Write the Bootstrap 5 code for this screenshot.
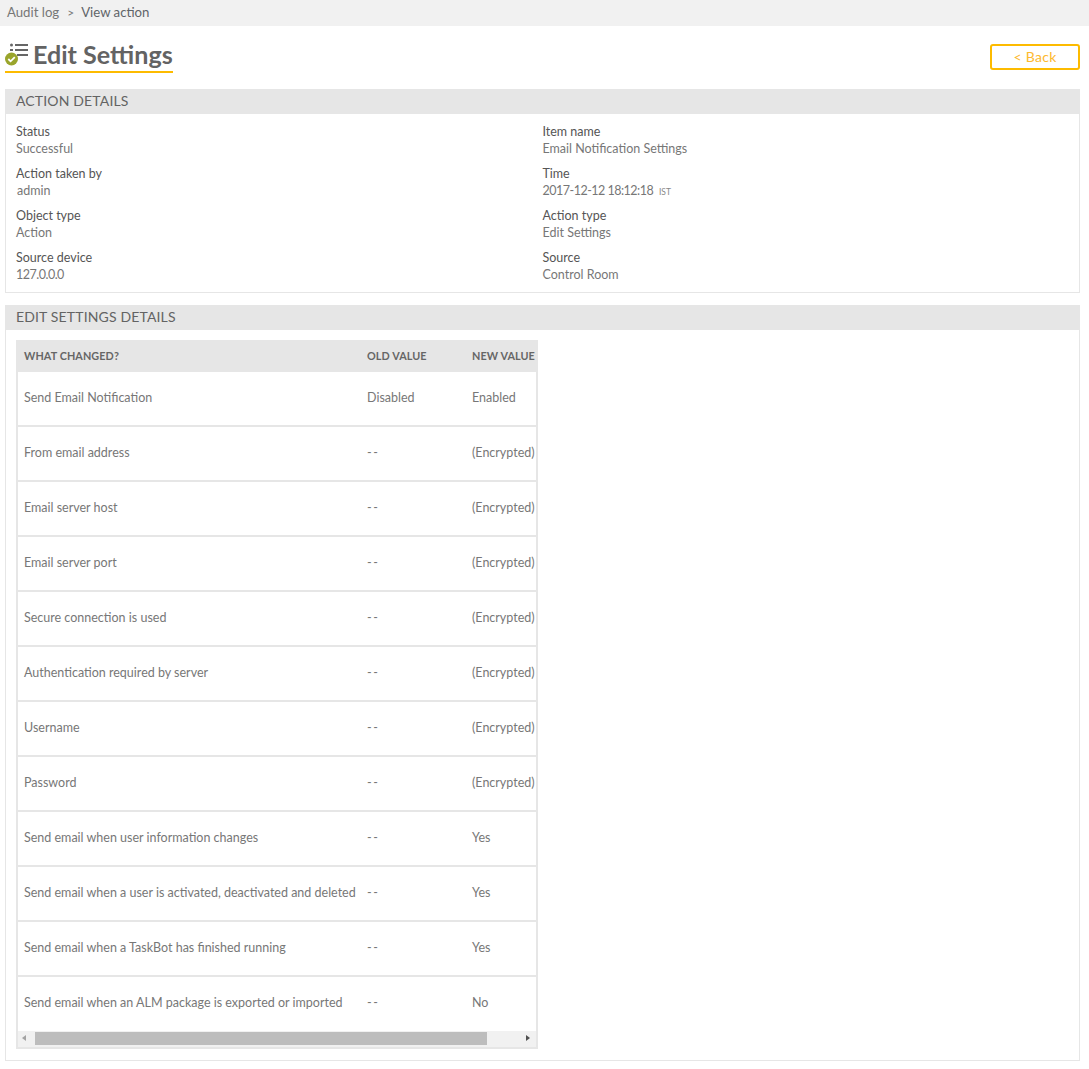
<!DOCTYPE html>
<html lang="en">
<head>
<meta charset="utf-8">
<title>Edit Settings</title>
<link href="https://cdn.jsdelivr.net/npm/bootstrap@5.3.0/dist/css/bootstrap.min.css" rel="stylesheet">
<style>
body{font-family:"Lato","Liberation Sans",sans-serif;font-size:12.5px;color:#666;background:#fff;line-height:17px}
.crumbs{height:26px;background:#f1f1f1;padding:4px 7px 0;font-size:13.2px;color:#777}
.crumbs .sep{margin:0 7px 0 8px;font-size:12px}
.crumbs .cur{color:#5f6468}
.pagehead{height:63px;padding:0 9px 0 5px}
.pagetitle{height:47px;padding-top:13px;border-bottom:2px solid #fdbb00;font-size:25.1px;font-weight:700;line-height:30px;color:#636363;gap:3px;box-sizing:border-box}
.pagetitle svg{flex:none;margin-top:3px}
.backbtn{width:90px;height:26px;margin-top:18px;border:2px solid #fdbb00;border-radius:3px;background:#fff;color:#fdb92e;font-size:14px;line-height:20px;padding:0;letter-spacing:.3px}
.backbtn:hover{background:#fff;color:#fdb92e;border-color:#fdbb00}
.sect{margin:0 9px 12px 5px;border:1px solid #e6e6e6;border-top:0}
.secthead{height:25px;margin:0 -1px;background:#e6e6e6;padding:3px 11px 0;font-size:14px;line-height:18px;color:#636363;letter-spacing:.15px}
.kvgrid{padding:9px 10px 1px;--bs-gutter-x:0;--bs-gutter-y:0}
.kv{height:42px}
.kvname{color:#555}
.kvval{color:#777}
.kvval.nudge{padding-left:1px}
.numeric{letter-spacing:-.5px}
.tz{font-size:8.5px;margin-left:3px;color:#888;letter-spacing:0}
.tblwrap{margin:10px 0 11px 10px;width:522px;border:2px solid #e6e6e6;border-top:0;border-bottom:0;overflow:hidden}
.chg{width:580px;table-layout:fixed;margin:0;border-collapse:separate;border-spacing:0;color:#777}
.chg th{height:32px;background:#e6e6e6;font-size:10.8px;font-weight:700;color:#666;padding:0 0 2px 6px;vertical-align:middle;border:0;box-shadow:none;letter-spacing:.1px}
.chg td{height:55px;padding:0 0 2px 6px;vertical-align:middle;border:0;border-bottom:2px solid #e6e6e6;color:#777;background:#fff;box-shadow:none;white-space:nowrap}
.chg tr:last-child td{border-bottom:0;height:54px;padding-bottom:4px}
.chg td.dash{letter-spacing:1.5px}
.hscroll{width:522px;height:18px;margin:-11px 0 11px 10px;background:#f1f1f1;border:2px solid #e6e6e6;border-top:0;padding:0 4px}
.thumb{width:452px;height:13px;margin-left:9px;background:#bdbdbd;margin-top:1px}
.arrow{width:0;height:0;border-top:3.5px solid transparent;border-bottom:3.5px solid transparent;margin-top:4px}
.arrow.lft{border-right:4px solid #a3a3a3}
.arrow.rgt{border-left:4px solid #505050;margin-left:auto;margin-right:2px}
</style>
</head>
<body>
<div class="crumbs">Audit log<span class="sep">&gt;</span><span class="cur">View action</span></div>
<div class="pagehead d-flex justify-content-between align-items-start">
  <div class="pagetitle d-flex align-items-start">
    <svg width="25" height="25" viewBox="0 0 25 25" aria-hidden="true">
      <circle cx="6.500" cy="3" r="1.500" fill="#666"/>
      <rect x="10" y="2" width="13" height="2" fill="#666"/>
      <rect x="5" y="7" width="3" height="2" fill="#666"/>
      <rect x="10" y="7" width="13" height="2" fill="#666"/>
      <rect x="12" y="12" width="11" height="2" fill="#666"/>
      <circle cx="6.500" cy="17" r="6.500" fill="#9aa52c"/>
      <path d="M3.300 17l2.300 2.300 4.200-4.200" fill="none" stroke="#fff" stroke-width="1.800"/>
    </svg>
    <span>Edit Settings</span>
  </div>
  <button type="button" class="btn backbtn">&lt; Back</button>
</div>

<section class="sect">
  <div class="secthead">ACTION DETAILS</div>
  <div class="row kvgrid">
    <div class="col-6 kv"><div class="kvname">Status</div><div class="kvval">Successful</div></div>
    <div class="col-6 kv"><div class="kvname">Item name</div><div class="kvval">Email Notification Settings</div></div>
    <div class="col-6 kv"><div class="kvname">Action taken by</div><div class="kvval nudge">admin</div></div>
    <div class="col-6 kv"><div class="kvname">Time</div><div class="kvval numeric">2017-12-12 18:12:18 <span class="tz">IST</span></div></div>
    <div class="col-6 kv"><div class="kvname">Object type</div><div class="kvval">Action</div></div>
    <div class="col-6 kv"><div class="kvname">Action type</div><div class="kvval">Edit Settings</div></div>
    <div class="col-6 kv"><div class="kvname">Source device</div><div class="kvval numeric">127.0.0.0</div></div>
    <div class="col-6 kv"><div class="kvname">Source</div><div class="kvval">Control Room</div></div>
  </div>
</section>

<section class="sect">
  <div class="secthead">EDIT SETTINGS DETAILS</div>
  <div class="tblwrap">
    <table class="table chg">
      <colgroup><col style="width:343px"><col style="width:105px"><col></colgroup>
      <thead><tr><th>WHAT CHANGED?</th><th>OLD VALUE</th><th>NEW VALUE</th></tr></thead>
      <tbody>
        <tr><td>Send Email Notification</td><td>Disabled</td><td>Enabled</td></tr>
        <tr><td>From email address</td><td class="dash">--</td><td>(Encrypted)</td></tr>
        <tr><td>Email server host</td><td class="dash">--</td><td>(Encrypted)</td></tr>
        <tr><td>Email server port</td><td class="dash">--</td><td>(Encrypted)</td></tr>
        <tr><td>Secure connection is used</td><td class="dash">--</td><td>(Encrypted)</td></tr>
        <tr><td>Authentication required by server</td><td class="dash">--</td><td>(Encrypted)</td></tr>
        <tr><td>Username</td><td class="dash">--</td><td>(Encrypted)</td></tr>
        <tr><td>Password</td><td class="dash">--</td><td>(Encrypted)</td></tr>
        <tr><td>Send email when user information changes</td><td class="dash">--</td><td>Yes</td></tr>
        <tr><td>Send email when a user is activated, deactivated and deleted</td><td class="dash">--</td><td>Yes</td></tr>
        <tr><td>Send email when a TaskBot has finished running</td><td class="dash">--</td><td>Yes</td></tr>
        <tr><td>Send email when an ALM package is exported or imported</td><td class="dash">--</td><td>No</td></tr>
      </tbody>
    </table>
  </div>
  <div class="hscroll d-flex">
    <span class="arrow lft"></span>
    <span class="thumb"></span>
    <span class="arrow rgt"></span>
  </div>
</section>
</body>
</html>
